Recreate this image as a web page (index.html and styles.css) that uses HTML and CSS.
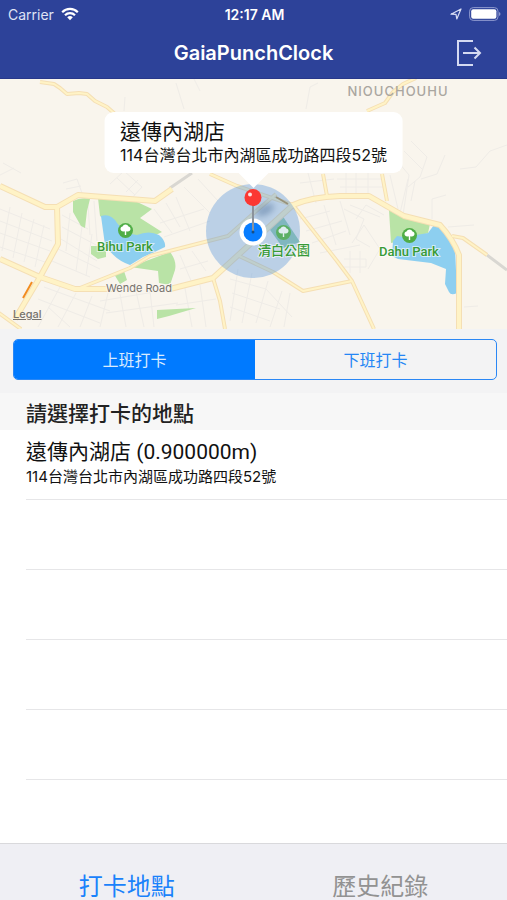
FILE: index.html
```html
<!DOCTYPE html>
<html lang="zh-Hant">
<head>
  <meta charset="UTF-8">
  <meta name="viewport" content="width=device-width, initial-scale=1">
  <title>GaiaPunchClock</title>
  <link rel="stylesheet" href="styles.css">
</head>
<body>
  <header class="header">
    <div class="status">
      <div class="carrier">
        <span>Carrier</span>
        <svg width="18" height="14" viewBox="0 0 18 14" fill="none" stroke="#fff" stroke-width="2.2">
          <path d="M1.2 5.2a11 11 0 0 1 15.6 0M4 8.2a7 7 0 0 1 10 0"/>
          <path d="M9 13.2l-2.8-2.9a4 4 0 0 1 5.6 0z" fill="#fff" stroke="none"/>
        </svg>
      </div>
      <span class="time">12:17 AM</span>
      <div class="battery">
        <svg width="12" height="12" viewBox="0 0 12 12" fill="none" stroke="#d9def5" stroke-width="1.2" stroke-linejoin="round">
          <path d="M1 6.2L11 1 6.8 11 6 6.4z"/>
        </svg>
        <svg width="32" height="14" viewBox="0 0 32 14">
          <rect x=".6" y=".6" width="28.4" height="12.8" rx="3.6" fill="none" stroke="#8e99cf"/>
          <rect x="2.2" y="2.2" width="25.2" height="9.6" rx="2" fill="#fff"/>
          <path d="M30 5v4q1.500-.6 1.500-2T30 5" fill="#8e99cf"/>
        </svg>
      </div>
    </div>
    <div class="navbar">
      <h1>GaiaPunchClock</h1>
      <button class="logout" aria-label="登出">
        <svg width="26" height="28" viewBox="0 0 26 28" fill="none" stroke="#d5daf2" stroke-width="2">
          <path d="M17 2H2v24h15M7 14h17M18.500 8.500L24 14l-5.500 5.500"/>
        </svg>
      </button>
    </div>
  </header>

  <section class="map">
    <svg class="map-canvas" viewBox="0 0 507 250" preserveAspectRatio="xMidYMid slice">
      <defs>
        <g id="roads">
          <path d="M40 3l14 2 6 4 7 6 12-1 8 1 8 7 12 6 8 7"/>
          <path d="M80 209l50-20 20-12 78-20 26-23 22-19M210 95l27 12 56 19 44 56 15 20 22 48"/>
          <path d="M213 199l7 23 5 28M237 176l36 17 30 19 49-10M323 95l4 22M382 95l5 27M416-1l-13 6-10 8-8 11-18 8M452 157l11 2 24 17M-1 234l22 16"/>
          <path class="wide" d="M170 210l43-11 80-73q18-8 47-9l29 0 35 20 36 9q13 14 19 30v74"/>
          <path class="wide" d="M0 107l45 21 12 0 21-12 77 6 17-12M57 128l1 37-18 33-25 42"/>
          <path class="wide" d="M0 180l40 18 35 12h37"/>
        </g>
      </defs>
      <rect width="507" height="250" fill="#f9f5ed"/>

      <!-- 小路 -->
      <g class="street">
        <path d="M63 104l14-4 6 17M66 110l15-3M110 105l14-13 18 16-11 12M117 99l18 17M126 113l12-12M0 96l14-7M3 84l18 10"/>
        <path d="M0 130l50 20M0 142l52 20M0 154l50 18M0 168l48 16M10 128l-8 44M22 134l-9 45M34 140l-10 43M44 146l-9 42"/>
        <path d="M62 136l26 14M62 148l38 20M61 160l36 22M58 170l42 20M52 182l38 16M70 134l-4 38M82 148l-6 44M92 155l-6 42M88 126l2 30M94 122l3 40"/>
        <path d="M44 208l66 24M38 220l62 24M60 208l-22 40M76 214l-18 34M92 217l-12 31M108 214l-8 34M48 228l22 20M100 222l60-10M106 234l72-10M120 215l6 33M136 212l8 36M150 212l4 36"/>
        <path d="M200 12l-6-12M306 30l4-22 8-4M176 4l8 26M124 32l1-14M154 130l18 24M166 124l14 24M176 118l14 34M160 144l44-14M164 158l46-16M184 108l26 26M198 100l20 22"/>
        <path d="M180 176l12 28M192 172l14 20M180 190l28-8M184 204l8 44M200 206l6 42M176 226l40-6M230 200l36 10 26 28M238 190l-8 52M252 194l-10 50M268 202l-12 42M282 212l-12 36M232 214l48 16M230 228l40 14M290 214l-6 34"/>
        <path d="M300 140l30-8M306 152l36-10M312 164l34-12M320 174l40-8M324 126l12 40M340 122l10 34M300 104l34-4M308 94l8 30M337 100h44M340 108h44M346 92v26M356 92v26M368 92v28"/>
        <path d="M344 130l20 10-8 20 14 8M350 126l30 12M356 140l10-14 18 10M352 164l12-18 16 24-12 20M344 180h22v8h-22M350 172v22M360 172v22"/>
        <path d="M411 62l16 16-7 20-12 10M404 72l18 18M399 84l10 12-6 40M421 100l16-5 8-19M390 96l8 34M432 140v-20l14-4M448 148l26-2M460 90l16-2 14-16 17-6M464 228l14-1M376 122l10 8M408 100l-8 34M415 102l-4 20"/>
      </g>

      <!-- 公園・湖 -->
      <g fill="#b9e3a6">
        <path d="M73 122q8-4 17-2l-3 12-2 17-4-2-8-14z"/>
        <path d="M98 119l37 3 17 8-12 9 22 14-25 12-37-28z"/>
        <path d="M91 167h15v11l-8 2-7-5zM114 195l10-3 3 9-7 4zM130 188l40-15q7 9 5 18l-5 15-11-2-1-12zM157 231l39-2-27 8-12 3z"/>
        <path d="M389 131l15 6 26 8-2 9-16 6-21 4z"/>
      </g>
      <path d="M268 148l14-12 18 27-17 6z" fill="#9dcdb0"/>
      <g fill="#8dcff0">
        <path d="M101 137q10-3 16 7 9 12 20 12 12-5 22 0 7 6 6 12-10 5-22 10l-13 8q-15-5-25-20z"/>
        <path d="M393 162l4-5 7 1 24-4 6-8 7 1 14 22 2 45q-6 3-8-1l-4-8 1-15-15-6-33-4-6-3z"/>
      </g>

      <!-- 大路 -->
      <path class="railway" d="M170 109l22-15M487 176l20 15"/>
      <use href="#roads" class="road road-edge"/>
      <use href="#roads" class="road road-fill"/>
      <path d="M32 203l-9 16" stroke="#f28c1e" stroke-width="2"/>
      <path d="M276 118l12 7" stroke="#c39445" stroke-width="2"/>

      <circle cx="253" cy="152" r="47" fill="#4d91dc" fill-opacity=".36"/>

      <!-- 公園マーク -->
      <g id="tree">
        <circle cx="125.500" cy="151.500" r="7.500" fill="#50ad47"/>
        <path d="M121 151.500a2.500 2.500 0 0 1 1.500-4 3.300 3.300 0 0 1 6 0 2.500 2.500 0 0 1 1.500 4q-1.500 1.500-3.800.8v3.700h-1.400v-3.700q-2.300.7-3.800-.8z" fill="#fff"/>
      </g>
      <use href="#tree" x="284" y="5"/>
      <use href="#tree" x="158" y="2" opacity=".75"/>

      <g class="place">
        <text x="125" y="172">Bihu Park</text>
        <text x="409" y="177">Dahu Park</text>
        <text x="284" y="176">清白公園</text>
      </g>
      <text class="road-name" x="139" y="213">Wende Road</text>
      <text class="district" x="398" y="17">NIOUCHOUHU</text>

      <!-- 現在地とピン -->
      <ellipse cx="265" cy="131" rx="10" ry="5" fill="#52739c" opacity=".5" transform="rotate(-28 265 131)" filter="blur(3px)"/>
      <circle cx="253" cy="153" r="13.500" fill="#fff"/>
      <circle cx="253" cy="153" r="9.500" fill="#087dff"/>
      <path d="M253 126v26" stroke="#8b929b" stroke-width="2"/>
      <circle cx="253" cy="153" r="1.500" fill="#164e86"/>
      <circle cx="253" cy="118.500" r="8.500" fill="#fb3733"/>
      <circle cx="250" cy="115.500" r="2" fill="#fff" opacity=".85"/>
    </svg>
    <div class="callout">
      <strong>遠傳內湖店</strong>
      <span>114台灣台北市內湖區成功路四段52號</span>
    </div>
    <a class="legal" href="#">Legal</a>
  </section>

  <div class="segment-area">
    <div class="segment">
      <button class="active">上班打卡</button>
      <button>下班打卡</button>
    </div>
  </div>

  <main>
    <h2>請選擇打卡的地點</h2>
    <ul class="places">
      <li>
        <p class="name">遠傳內湖店 (0.900000m)</p>
        <p class="address">114台灣台北市內湖區成功路四段52號</p>
      </li>
      <li></li>
      <li></li>
      <li></li>
      <li></li>
    </ul>
  </main>

  <nav class="tabs">
    <a class="active" href="#">打卡地點</a>
    <a href="#">歷史紀錄</a>
  </nav>
</body>
</html>
```
FILE: styles.css
```css
* {
  box-sizing: border-box;
}
body {
  margin: 0;
  min-height: 100vh;
  display: flex;
  flex-direction: column;
  background: #fff;
  color: #111;
  font-family: Inter, "Noto Sans CJK TC", sans-serif;
}
h1, h2, p, ul {
  margin: 0;
  padding: 0;
}
button {
  font-family: inherit;
  cursor: pointer;
}
a {
  text-decoration: none;
}

/* ヘッダー */
.header {
  background: #2d4299;
  color: #fff;
  border-bottom: 1px solid #28388a;
}
.status {
  display: grid;
  grid-template-columns: 1fr auto 1fr;
  align-items: center;
  height: 28px;
  padding: 0 6px 0 8px;
  font-size: 14px;
}
.carrier, .battery {
  display: flex;
  align-items: center;
  gap: 7px;
}
.carrier {
  color: #dfe3f5;
}
.battery {
  justify-content: flex-end;
}
.time {
  font-weight: 600;
}
.navbar {
  display: grid;
  grid-template-columns: 1fr auto 1fr;
  align-items: center;
  height: 50px;
  padding: 0 25px;
}
.navbar h1 {
  grid-column: 2;
  font-size: 20px;
  font-weight: 600;
}
.logout {
  justify-self: end;
  display: flex;
  padding: 0;
  border: none;
  background: none;
}

/* 地図 */
.map {
  position: relative;
  height: 250px;
  overflow: hidden;
}
.map-canvas {
  display: block;
  width: 100%;
  height: 100%;
}
.street {
  fill: none;
  stroke: #efece7;
  stroke-width: 1;
}
.railway {
  fill: none;
  stroke: #d9d7d2;
  stroke-width: 3;
}
.road {
  fill: none;
  stroke-linejoin: round;
}
.road-edge {
  --wide: 6px;
  stroke: #f5dfb4;
  stroke-width: 4px;
}
.road-fill {
  --wide: 4px;
  stroke: #fff3c6;
  stroke-width: 2px;
}
.wide {
  stroke-width: var(--wide);
}
.place {
  font-family: Roboto, "Noto Sans CJK TC", sans-serif;
  font-size: 13px;
  font-weight: 500;
  fill: #389a36;
  stroke: #fff;
  stroke-width: 2;
  stroke-opacity: .6;
  paint-order: stroke;
  text-anchor: middle;
}
.road-name {
  font-size: 11px;
  fill: #77736e;
  stroke: #f9f5ed;
  stroke-width: 2;
  paint-order: stroke;
  text-anchor: middle;
}
.district {
  font-size: 13px;
  font-weight: 500;
  letter-spacing: 1px;
  fill: #aaa6a0;
  text-anchor: middle;
}
.callout {
  position: absolute;
  top: 33px;
  left: 50%;
  transform: translateX(-50%);
  display: flex;
  flex-direction: column;
  padding: 7px 16px;
  border-radius: 9px;
  background: #fff;
  white-space: nowrap;
  font-size: 16px;
  line-height: 22px;
}
.callout::after {
  content: "";
  position: absolute;
  top: 100%;
  left: 50%;
  margin-left: -15px;
  border: 15px solid transparent;
  border-top-color: #fff;
  border-bottom: 0;
}
.callout strong {
  font-size: 21px;
  font-weight: 400;
  line-height: 25px;
}
.legal {
  position: absolute;
  left: 13px;
  bottom: 8px;
  color: #77736e;
  font-size: 11px;
  font-weight: 500;
  line-height: 14px;
  text-decoration: underline;
}

/* 出勤・退勤の切り替え */
.segment-area {
  padding: 10px 10px 13px 13px;
  background: #f3f3f4;
}
.segment {
  display: flex;
  height: 41px;
  border: 1px solid #2a87f5;
  border-radius: 5px;
  overflow: hidden;
}
.segment button {
  flex: 1;
  padding: 0 0 2px;
  border: none;
  background: none;
  color: #2486f5;
  font-size: 16px;
}
.segment .active {
  background: #007aff;
  color: #d9ebff;
}

/* 場所リスト */
main {
  flex: 1;
}
h2 {
  height: 37px;
  padding-left: 26px;
  background: #f7f7f7;
  color: #222;
  font-size: 21px;
  font-weight: 500;
  line-height: 42px;
}
.places {
  margin-left: 26px;
  list-style: none;
}
.places li {
  height: 70px;
  padding-top: 9px;
  border-bottom: 1px solid #e6e6e8;
}
.name {
  font-family: Roboto, "Noto Sans CJK TC", sans-serif;
  font-size: 21px;
  line-height: 27px;
}
.address {
  font-size: 15px;
  line-height: 22px;
}

/* タブ */
.tabs {
  display: flex;
  border-top: 1px solid #d9d9dc;
  background: #efeff4;
}
.tabs a {
  flex: 1;
  padding-top: 30px;
  color: #929292;
  font-size: 24px;
  line-height: 26px;
  text-align: center;
}
.tabs .active {
  color: #1a82fb;
}
```
